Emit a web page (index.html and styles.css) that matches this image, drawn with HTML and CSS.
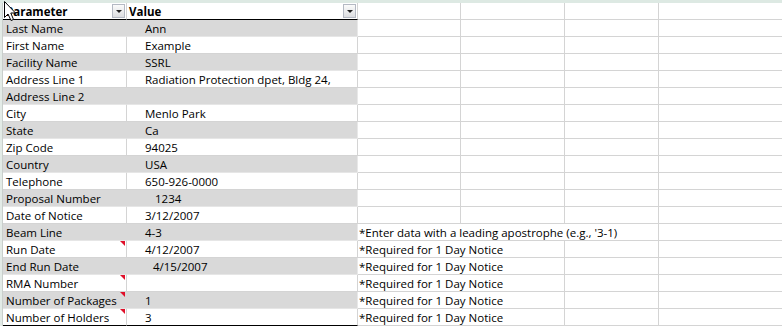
FILE: index.html
```html
<!DOCTYPE html>
<html>
<head>
<meta charset="utf-8">
<link rel="stylesheet" href="styles.css">
</head>
<body>
<div class="sheet">
  <div class="topstrip"></div>
  <div class="body">
    <div class="leftstrip"></div>
    <div class="grid">
      <div class="row head">
        <div class="c a hd"><span>Parameter</span><span class="dd"></span></div>
        <div class="c b hd"><span>Value</span><span class="dd"></span></div>
        <div class="c"></div><div class="c"></div><div class="c"></div><div class="c last"></div>
      </div>
      <div class="row band">
        <div class="c a">Last Name</div><div class="c b v">Ann</div>
        <div class="c"></div><div class="c"></div><div class="c"></div><div class="c last"></div>
      </div>
      <div class="row">
        <div class="c a">First Name</div><div class="c b v">Example</div>
        <div class="c"></div><div class="c"></div><div class="c"></div><div class="c last"></div>
      </div>
      <div class="row band">
        <div class="c a">Facility Name</div><div class="c b v">SSRL</div>
        <div class="c"></div><div class="c"></div><div class="c"></div><div class="c last"></div>
      </div>
      <div class="row">
        <div class="c a">Address Line 1</div><div class="c b v">Radiation Protection dpet, Bldg 24,</div>
        <div class="c"></div><div class="c"></div><div class="c"></div><div class="c last"></div>
      </div>
      <div class="row band">
        <div class="c a">Address Line 2</div><div class="c b v"></div>
        <div class="c"></div><div class="c"></div><div class="c"></div><div class="c last"></div>
      </div>
      <div class="row">
        <div class="c a">City</div><div class="c b v">Menlo Park</div>
        <div class="c"></div><div class="c"></div><div class="c"></div><div class="c last"></div>
      </div>
      <div class="row band">
        <div class="c a">State</div><div class="c b v">Ca</div>
        <div class="c"></div><div class="c"></div><div class="c"></div><div class="c last"></div>
      </div>
      <div class="row">
        <div class="c a">Zip Code</div><div class="c b v">94025</div>
        <div class="c"></div><div class="c"></div><div class="c"></div><div class="c last"></div>
      </div>
      <div class="row band">
        <div class="c a">Country</div><div class="c b v">USA</div>
        <div class="c"></div><div class="c"></div><div class="c"></div><div class="c last"></div>
      </div>
      <div class="row">
        <div class="c a">Telephone</div><div class="c b v">650-926-0000</div>
        <div class="c"></div><div class="c"></div><div class="c"></div><div class="c last"></div>
      </div>
      <div class="row band">
        <div class="c a">Proposal Number</div><div class="c b v in2">1234</div>
        <div class="c"></div><div class="c"></div><div class="c"></div><div class="c last"></div>
      </div>
      <div class="row">
        <div class="c a">Date of Notice</div><div class="c b v">3/12/2007</div>
        <div class="c"></div><div class="c"></div><div class="c"></div><div class="c last"></div>
      </div>
      <div class="row band">
        <div class="c a">Beam Line</div><div class="c b v">4-3</div>
        <div class="c note wide">*Enter data with a leading apostrophe (e.g., '3-1)</div><div class="c last"></div>
      </div>
      <div class="row">
        <div class="c a cm">Run Date</div><div class="c b v">4/12/2007</div>
        <div class="c note">*Required for 1 Day Notice</div><div class="c"></div><div class="c last"></div>
      </div>
      <div class="row band">
        <div class="c a">End Run Date</div><div class="c b v in1">4/15/2007</div>
        <div class="c note">*Required for 1 Day Notice</div><div class="c"></div><div class="c last"></div>
      </div>
      <div class="row">
        <div class="c a cm">RMA Number</div><div class="c b v"></div>
        <div class="c note">*Required for 1 Day Notice</div><div class="c"></div><div class="c last"></div>
      </div>
      <div class="row band">
        <div class="c a cm">Number of Packages</div><div class="c b v">1</div>
        <div class="c note">*Required for 1 Day Notice</div><div class="c"></div><div class="c last"></div>
      </div>
      <div class="row end">
        <div class="c a cm">Number of Holders</div><div class="c b v">3</div>
        <div class="c note">*Required for 1 Day Notice</div><div class="c"></div><div class="c last"></div>
      </div>
    </div>
  </div>
  <svg class="cursor" width="14" height="22" viewBox="0 0 14 22"><path d="M1.5 1.5 L1.5 17.5 L5 14 L8 20.5 L10.5 19.5 L7.8 13 L12.5 13 Z" fill="#fff" stroke="#000" stroke-width="1" stroke-linejoin="miter"/></svg>
</div>
</body>
</html>
```

FILE: styles.css
```css
html, body {
  margin: 0;
  padding: 0;
  background: #fff;
}
.sheet {
  position: relative;
  width: 782px;
  height: 326px;
  overflow: hidden;
  font-family: "Open Sans", "Liberation Sans", Arial, sans-serif;
  font-size: 11.5px;
  color: #000;
}
.topstrip {
  height: 3px;
  background: #dde9e3;
}
.body {
  display: flex;
}
.leftstrip {
  width: 2px;
  background: #e3ebe7;
  border-right: 1px solid #c9cfcc;
  flex: none;
}
.grid {
  flex: 1;
}
.row {
  display: grid;
  grid-template-columns: 124px 231px 103px 104px 94px 1fr;
  height: 17px;
}
.c {
  box-sizing: border-box;
  height: 17px;
  border-right: 1px solid #d4d4d4;
  border-bottom: 1px solid #d4d4d4;
  line-height: 17px;
  white-space: nowrap;
  overflow: visible;
  position: relative;
}
.c.last {
  border-right: 0;
}
.a {
  padding-left: 3px;
}
.v {
  padding-left: 18px;
}
.v.in2 {
  padding-left: 28px;
}
.v.in1 {
  padding-left: 26px;
}
.band .a,
.band .b {
  background: #d9d9d9;
  border-color: #d9d9d9;
  border-bottom-color: #e6e6e6;
}
.band .b {
  border-right-color: #e8e8e8;
}
.head .a,
.head .b {
  border-bottom: 1px solid #000;
  font-weight: bold;
  display: flex;
  justify-content: space-between;
  align-items: center;
}
.head .b {
  padding-left: 2px;
}
.head .a {
  padding-left: 3px;
}
.dd {
  width: 13px;
  height: 14px;
  margin-right: 1px;
  margin-top: -1px;
  box-sizing: border-box;
  border: 1px solid #b4b9c3;
  background: linear-gradient(#fbfbfb, #dcdde0);
  display: flex;
  align-items: center;
  justify-content: center;
}
.dd::after {
  content: "";
  border-left: 3px solid transparent;
  border-right: 3px solid transparent;
  border-top: 3px solid #222;
  margin-top: 1px;
}
.end .a,
.end .b {
  border-bottom: 1px solid #000;
}
.note {
  grid-column: span 2;
  padding-left: 1px;
}
.note.wide {
  grid-column: span 3;
}
.cm::after {
  content: "";
  position: absolute;
  top: 0;
  right: 1px;
  width: 0;
  height: 0;
  border-top: 5px solid #e0102a;
  border-left: 5px solid transparent;
}
.cursor {
  position: absolute;
  left: 3px;
  top: 0;
}
```
